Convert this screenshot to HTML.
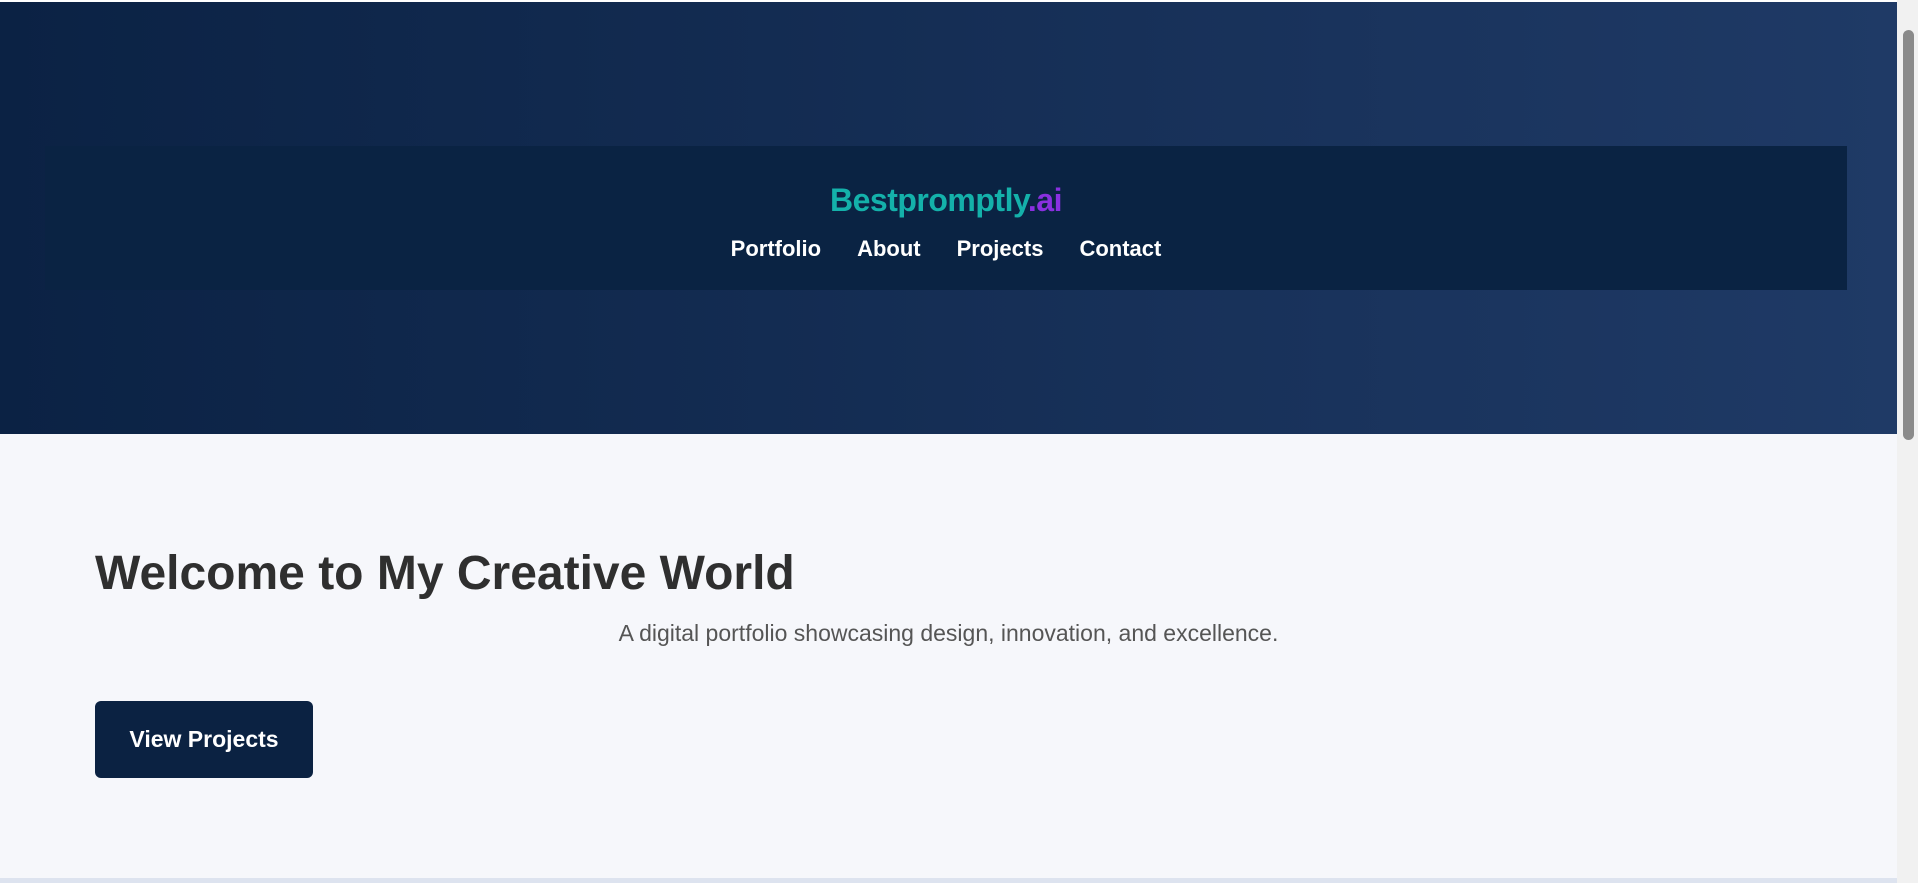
<!DOCTYPE html>
<html><head><style>
html,body{margin:0;padding:0;}
body{width:1918px;height:883px;overflow:hidden;background:#f6f7fb;font-family:"Liberation Sans",sans-serif;position:relative;}
.top{position:absolute;left:0;top:0;width:1897px;height:2px;background:#fff;}
header{position:absolute;left:0;top:2px;width:1897px;height:432px;background:linear-gradient(90deg,#0b2244,#1f3a66);}
nav{position:absolute;left:45px;top:144px;width:1802px;height:144px;background:#0a2343;text-align:center;}
.logo{position:absolute;left:0;right:0;top:36px;font-size:32px;font-weight:bold;color:#14b1aa;letter-spacing:-0.5px;}
.logo span{color:#8a30e0;}
.links{position:absolute;left:0;right:0;top:90px;font-size:22px;font-weight:bold;color:#fff;}
.links a{margin:0 18px;}
.sb{position:absolute;right:0;top:0;width:21px;height:883px;background:#f1f1f1;}
.thumb{position:absolute;right:4px;top:30px;width:11px;height:410px;background:#8a8a8a;border-radius:6px;}
h1{position:absolute;left:95px;top:546px;margin:0;font-size:48px;color:#2f2f2f;font-weight:bold;}
.sub{position:absolute;left:0;width:1897px;top:620px;text-align:center;font-size:23px;color:#555;}
.btn{position:absolute;left:95px;top:701px;width:218px;height:77px;background:#0b2242;border-radius:6px;color:#fff;font-size:23px;font-weight:bold;text-align:center;line-height:77px;}
.bot{position:absolute;left:0;top:878px;width:1897px;height:5px;background:#dde3ef;}
</style></head><body>
<div class="top"></div>
<header><nav><div class="logo">Bestpromptly<span>.ai</span></div>
<div class="links"><a>Portfolio</a><a>About</a><a>Projects</a><a>Contact</a></div></nav></header>
<h1>Welcome to My Creative World</h1>
<div class="sub">A digital portfolio showcasing design, innovation, and excellence.</div>
<div class="btn">View Projects</div>
<div class="bot"></div>
<div class="sb"><div class="thumb"></div></div>
</body></html>
